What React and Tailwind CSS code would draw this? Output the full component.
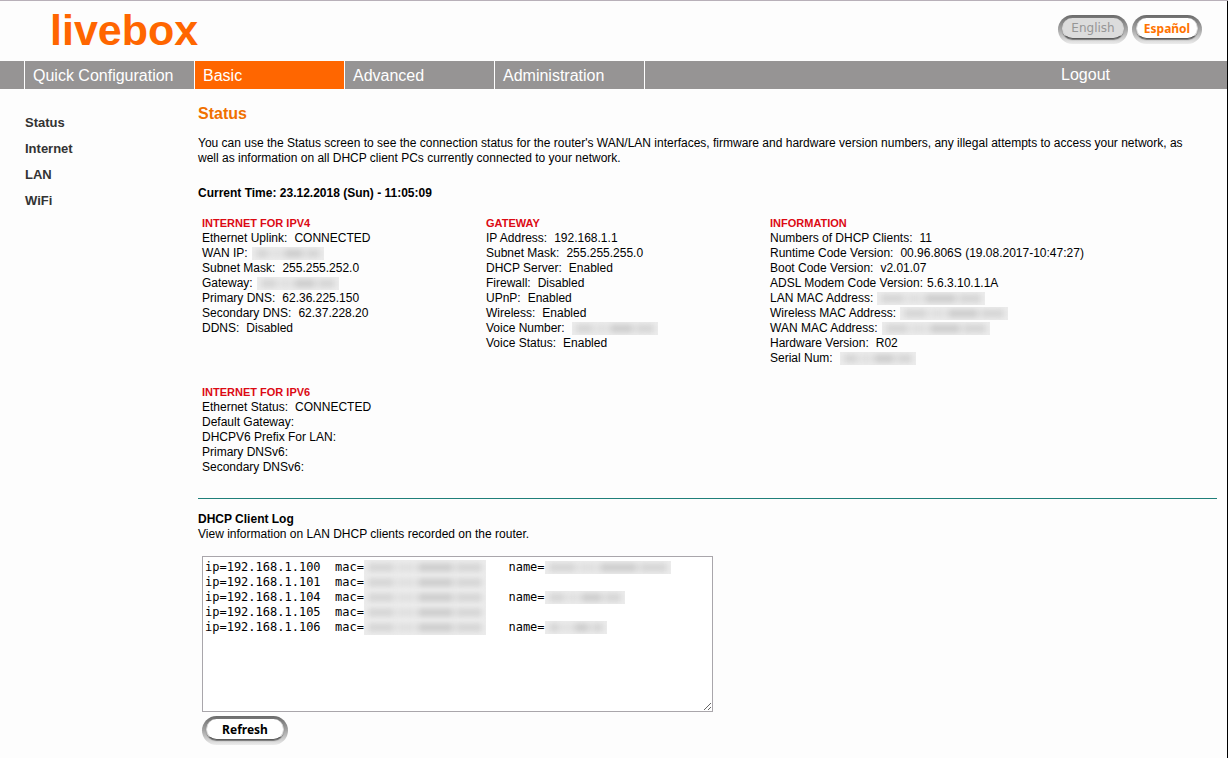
import React from "react";

const tabs = [
  { label: "Quick Configuration", width: "w-[170px]" },
  { label: "Basic", width: "w-[150px]", active: true },
  { label: "Advanced", width: "w-[150px]" },
  { label: "Administration", width: "w-[150px]" },
];

const sections = {
  ipv4: {
    title: "INTERNET FOR IPV4",
    rows: [
      { label: "Ethernet Uplink:", value: "CONNECTED" },
      { label: "WAN IP:", hidden: "w-[72px]", tight: true },
      { label: "Subnet Mask:", value: "255.255.252.0" },
      { label: "Gateway:", hidden: "w-[82px]", tight: true },
      { label: "Primary DNS:", value: "62.36.225.150" },
      { label: "Secondary DNS:", value: "62.37.228.20" },
      { label: "DDNS:", value: "Disabled" },
    ],
  },
  gateway: {
    title: "GATEWAY",
    rows: [
      { label: "IP Address:", value: "192.168.1.1" },
      { label: "Subnet Mask:", value: "255.255.255.0" },
      { label: "DHCP Server:", value: "Enabled" },
      { label: "Firewall:", value: "Disabled" },
      { label: "UPnP:", value: "Enabled" },
      { label: "Wireless:", value: "Enabled" },
      { label: "Voice Number:", hidden: "w-[86px]" },
      { label: "Voice Status:", value: "Enabled" },
    ],
  },
  info: {
    title: "INFORMATION",
    rows: [
      { label: "Numbers of DHCP Clients:", value: "11" },
      { label: "Runtime Code Version:", value: "00.96.806S (19.08.2017-10:47:27)" },
      { label: "Boot Code Version:", value: "v2.01.07" },
      { label: "ADSL Modem Code Version:", value: "5.6.3.10.1.1A", tight: true },
      { label: "LAN MAC Address:", hidden: "w-[108px]", tight: true },
      { label: "Wireless MAC Address:", hidden: "w-[108px]", tight: true },
      { label: "WAN MAC Address:", hidden: "w-[108px]", tight: true },
      { label: "Hardware Version:", value: "R02" },
      { label: "Serial Num:", hidden: "w-[76px]" },
    ],
  },
  ipv6: {
    title: "INTERNET FOR IPV6",
    rows: [
      { label: "Ethernet Status:", value: "CONNECTED" },
      { label: "Default Gateway:" },
      { label: "DHCPV6 Prefix For LAN:" },
      { label: "Primary DNSv6:" },
      { label: "Secondary DNSv6:" },
    ],
  },
};

const clients = [
  { ip: "192.168.1.100", name: "w-[126px]" },
  { ip: "192.168.1.101" },
  { ip: "192.168.1.104", name: "w-[80px]" },
  { ip: "192.168.1.105" },
  { ip: "192.168.1.106", name: "w-[62px]" },
];

const log = clients
  .map((c) => `ip=${c.ip}  mac=` + (c.name ? " ".repeat(20) + "name=" : ""))
  .join("\n");

function Masked({ width, height = "h-[13px]" }) {
  return (
    <span aria-hidden="true" className={`flex items-center overflow-hidden bg-[#ededed] px-1 ${height} ${width}`}>
      <span className="flex h-[7px] w-full gap-[3px] blur-[3px]">
        <span className="flex-3 bg-[#d0d0d0]" />
        <span className="flex-2 bg-[#dcdcdc]" />
        <span className="flex-4 bg-[#c6c6c6]" />
        <span className="flex-3 bg-[#d0d0d0]" />
      </span>
    </span>
  );
}

function Section({ title, rows }) {
  return (
    <section>
      <h2 className="text-[11px] leading-[15px] font-bold text-[#dc0a14]">{title}</h2>
      <dl>
        {rows.map((r) => (
          <div key={r.label} className={`flex h-[15px] items-center whitespace-nowrap ${r.tight ? "gap-1" : "gap-[7px]"}`}>
            <dt>{r.label}</dt>
            {r.value && <dd>{r.value}</dd>}
            {r.hidden && (
              <dd>
                <Masked width={r.hidden} />
              </dd>
            )}
          </div>
        ))}
      </dl>
    </section>
  );
}

function Pill({ children, width, face }) {
  return (
    <button
      type="button"
      className={`h-[29px] rounded-full bg-linear-to-b from-[#6b6b6b] via-[#a6a6a6] to-[#ececec] px-1 pt-[3px] pb-[5px] ${width}`}
    >
      <span
        className={`flex h-full items-center justify-center rounded-full border-x border-b border-x-[#d8d8d8] border-b-[#5c5c5c] shadow-[0_1px_1px_#777] ${face}`}
      >
        {children}
      </span>
    </button>
  );
}

export default function App() {
  return (
    <div className="min-h-screen border-t border-[#b8b0b9] bg-[#fdfdfd] font-['Liberation_Sans',Arial,sans-serif] text-[12px] leading-[15px] text-black">
      <div className="min-h-[757px] border-r border-black">
        <header className="flex h-[60px] items-start justify-between pr-[25px] pl-[50px]">
          <h1 className="pt-1 text-[43px] leading-[50px] font-bold text-[#ff6600]">livebox</h1>
          <div className="flex gap-1 pt-[14px]">
            <Pill
              width="w-[70px]"
              face="bg-[#dcdcdc] font-['DejaVu_Sans',Verdana,sans-serif] text-[12px] text-[#969696]"
            >
              English
            </Pill>
            <Pill width="w-[70px]" face="bg-white font-['Noto_Sans',sans-serif] text-[12px] font-bold text-[#ff7300]">
              Español
            </Pill>
          </div>
        </header>

        <nav className="flex h-7 justify-between bg-[#969494] text-[16px] leading-7 text-white">
          <div className="flex border-r border-white pl-6">
            {tabs.map((t) => (
              <a
                key={t.label}
                href="#"
                className={`border-l border-white pt-px pl-2 ${t.width} ${t.active ? "bg-[#ff6600]" : ""}`}
              >
                {t.label}
              </a>
            ))}
          </div>
          <a href="#" className="pr-[117px]">
            Logout
          </a>
        </nav>

        <div className="flex">
          <aside className="w-[198px] shrink-0 pt-[21px] pl-[25px]">
            <ul className="text-[13px] leading-[26px] font-bold text-[#333]">
              {["Status", "Internet", "LAN", "WiFi"].map((item) => (
                <li key={item}>
                  <a href="#">{item}</a>
                </li>
              ))}
            </ul>
          </aside>

          <main className="min-w-0 flex-1 pt-[15px] pr-[10px]">
            <h2 className="text-[16px] leading-5 font-bold text-[#f07000]">Status</h2>
            <p className="pt-3 pr-4">
              You can use the Status screen to see the connection status for the router's WAN/LAN interfaces, firmware
              and hardware version numbers, any illegal attempts to access your network, as well as information on all
              DHCP client PCs currently connected to your network.
            </p>
            <p className="pt-5 font-bold">Current Time: 23.12.2018 (Sun) - 11:05:09</p>

            <div className="grid grid-cols-[284px_284px_1fr] gap-y-[19px] pt-[15px] pl-1">
              <Section {...sections.ipv4} />
              <Section {...sections.gateway} />
              <Section {...sections.info} />
              <Section {...sections.ipv6} />
            </div>

            <hr className="mt-[23px] border-t border-[#1f7f7a]" />

            <label htmlFor="log" className="mt-[13px] block font-bold">
              DHCP Client Log
            </label>
            <p>View information on LAN DHCP clients recorded on the router.</p>

            <div className="relative mt-[14px] ml-1 w-[511px]">
              <textarea
                id="log"
                readOnly
                defaultValue={log}
                className="block h-[156px] w-full border border-[#a9a6ab] bg-white px-[2px] py-[3px] font-['DejaVu_Sans_Mono',monospace] text-[12px] leading-[15px]"
              />
              <div className="pointer-events-none absolute top-1 left-[162px]">
                {clients.map((c) => (
                  <div key={c.ip} className="flex h-[15px] items-center gap-[59px]">
                    <Masked width="w-[122px]" height="h-[15px]" />
                    {c.name && <Masked width={c.name} />}
                  </div>
                ))}
              </div>
            </div>

            <div className="flex pt-1 pl-1">
              <Pill width="w-[86px]" face="bg-white font-['Noto_Sans',sans-serif] text-[12px] font-bold">
                Refresh
              </Pill>
            </div>
          </main>
        </div>
      </div>
    </div>
  );
}
